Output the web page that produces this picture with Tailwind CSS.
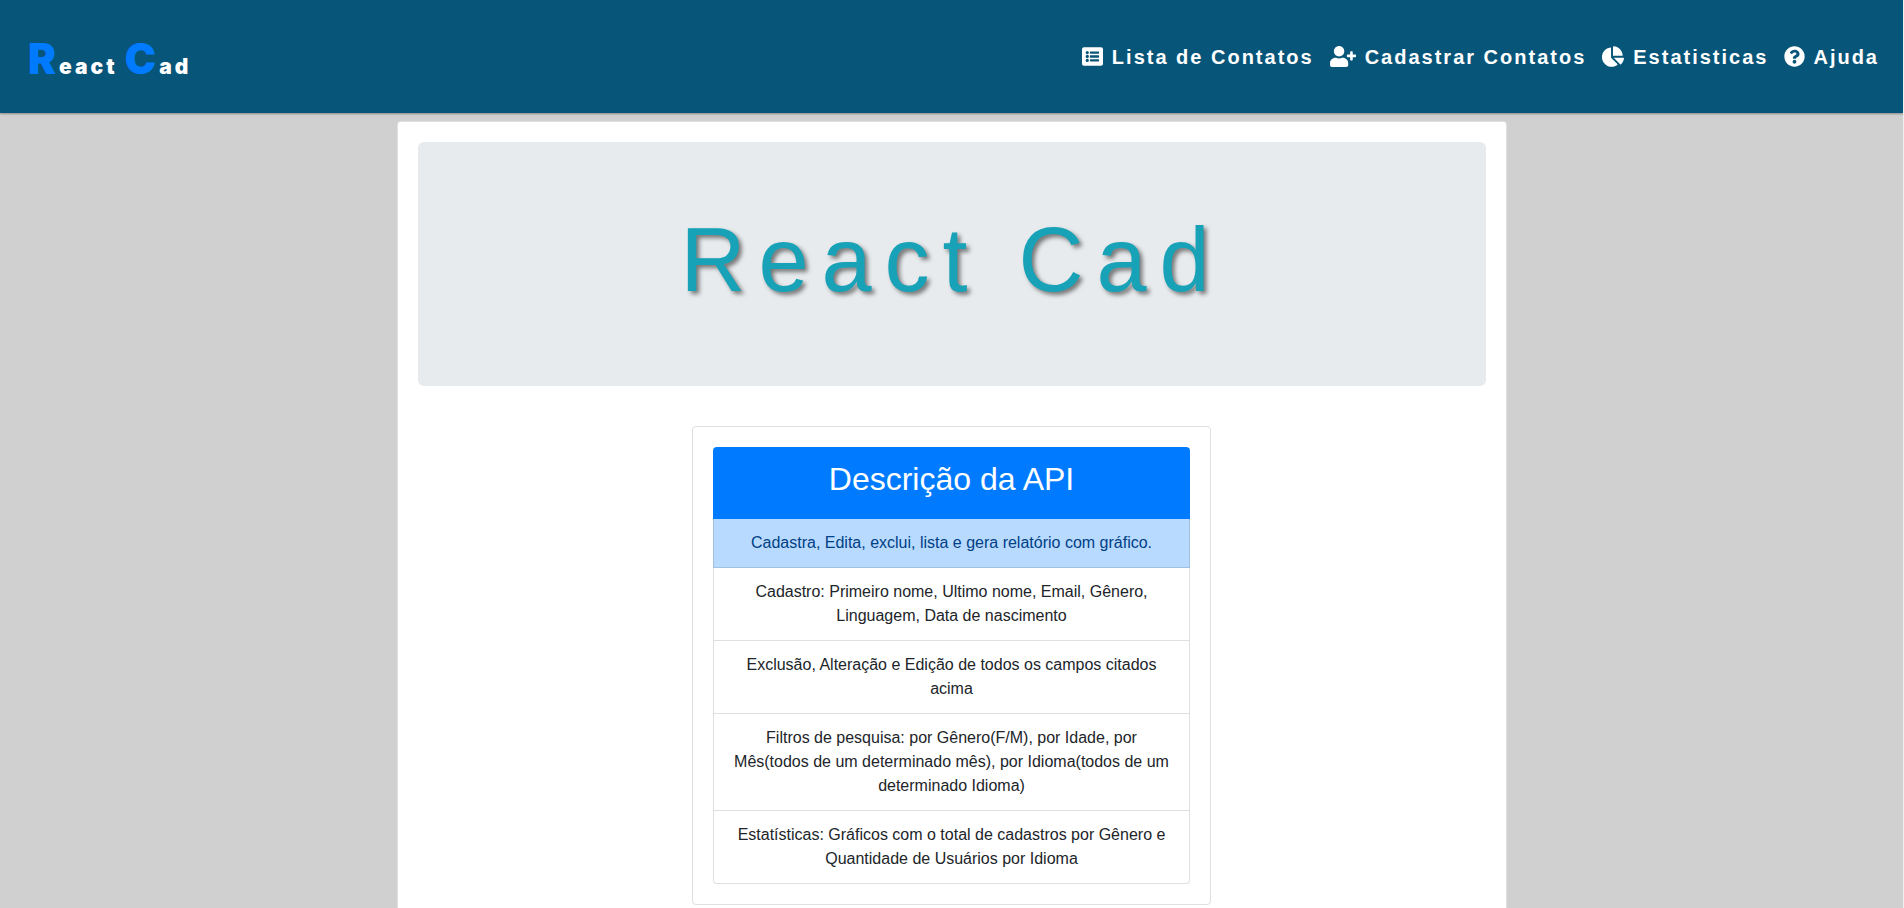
<!DOCTYPE html>
<html lang="pt-BR">
<head>
<meta charset="utf-8">
<meta name="viewport" content="width=device-width, initial-scale=1">
<title>React Cad</title>
<script src="https://cdn.jsdelivr.net/npm/@tailwindcss/browser@4"></script>
</head>
<body class="min-h-screen border-r border-[#f0f0f0] bg-[#d0d0d0] font-['Liberation_Sans',Arial,sans-serif] text-base text-[#212529]">
<header class="flex h-[113px] items-center justify-between bg-[#08557a] pr-6 pl-7 shadow-[0_1px_2px_#888]">
  <a href="#" class="pt-1 font-['Arial_Black',Inter,sans-serif] text-[21px] leading-none font-black tracking-[3px] text-white"><span class="text-[42px] text-[#007bff]">R</span>eact <span class="text-[42px] text-[#007bff]">C</span>ad</a>
  <nav class="flex items-center gap-4 text-xl leading-[30px] font-bold tracking-[2px] text-white">
    <a href="#" class="flex items-center gap-[9px]">
      <svg class="h-[21px] w-[21px]" viewBox="0 0 512 512" fill="currentColor" aria-hidden="true"><path fill-rule="evenodd" d="M464 480H48c-26.500 0-48-21.500-48-48V80c0-26.500 21.500-48 48-48h416c26.500 0 48 21.500 48 48v352c0 26.500-21.500 48-48 48zM128 120a40 40 0 1 0 0 80a40 40 0 0 0 0-80zm0 96a40 40 0 1 0 0 80a40 40 0 0 0 0-80zm0 96a40 40 0 1 0 0 80a40 40 0 0 0 0-80zm288-136v-32c0-6.600-5.400-12-12-12H204c-6.600 0-12 5.400-12 12v32c0 6.600 5.400 12 12 12h200c6.600 0 12-5.400 12-12zm0 96v-32c0-6.600-5.400-12-12-12H204c-6.600 0-12 5.400-12 12v32c0 6.600 5.400 12 12 12h200c6.600 0 12-5.400 12-12zm0 96v-32c0-6.600-5.400-12-12-12H204c-6.600 0-12 5.400-12 12v32c0 6.600 5.400 12 12 12h200c6.600 0 12-5.400 12-12z"/></svg>
      Lista de Contatos</a>
    <a href="#" class="flex items-center gap-[9px]">
      <svg class="h-[21px] w-[26px]" viewBox="0 0 640 512" fill="currentColor" aria-hidden="true"><path d="M624 208h-64v-64c0-8.800-7.200-16-16-16h-32c-8.800 0-16 7.200-16 16v64h-64c-8.800 0-16 7.200-16 16v32c0 8.800 7.200 16 16 16h64v64c0 8.800 7.200 16 16 16h32c8.800 0 16-7.200 16-16v-64h64c8.800 0 16-7.200 16-16v-32c0-8.800-7.200-16-16-16zm-400 48c70.700 0 128-57.300 128-128S294.700 0 224 0 96 57.300 96 128s57.300 128 128 128zm89.600 32h-16.700c-22.200 10.200-46.900 16-72.900 16s-50.600-5.800-72.900-16h-16.700C60.200 288 0 348.200 0 422.400V464c0 26.500 21.500 48 48 48h352c26.500 0 48-21.500 48-48v-41.600c0-74.200-60.200-134.400-134.400-134.400z"/></svg>
      Cadastrar Contatos</a>
    <a href="#" class="flex items-center gap-[9px]">
      <svg class="h-[21px] w-[22px]" viewBox="0 0 544 512" fill="currentColor" aria-hidden="true"><path d="M527.790 288H290.500l158.030 158.030c6.040 6.040 15.980 6.530 22.190.680 38.700-36.460 65.320-85.610 73.130-140.860 1.340-9.460-6.510-17.850-16.060-17.850zm-15.830-64.800C503.720 103.740 408.260 8.280 288.800.040 279.680-.590 272 7.100 272 16.240V240h223.770c9.140 0 16.820-7.680 16.190-16.800zM224 288V50.710c0-9.550-8.390-17.400-17.840-16.060C86.990 51.490-4.100 155.600.140 280.370 4.500 408.510 114.830 513.590 243.030 511.980c50.400-.630 96.970-16.870 135.260-44.030 7.900-5.600 8.420-17.230 1.570-24.080L224 288z"/></svg>
      Estatisticas</a>
    <a href="#" class="flex items-center gap-2">
      <svg class="h-[21px] w-[21px]" viewBox="0 0 512 512" fill="currentColor" aria-hidden="true"><path d="M504 256c0 136.997-111.043 248-248 248S8 392.997 8 256C8 119.083 119.043 8 256 8s248 111.083 248 248zM262.655 90c-54.497 0-89.255 22.957-116.549 63.758-3.536 5.286-2.353 12.415 2.715 16.258l34.699 26.310c5.205 3.947 12.621 3.008 16.665-2.122 17.864-22.658 30.113-35.797 57.303-35.797 20.429 0 45.698 13.148 45.698 32.958 0 14.976-12.363 22.667-32.534 33.976C247.128 238.528 216 254.941 216 296v4c0 6.627 5.373 12 12 12h56c6.627 0 12-5.373 12-12v-1.333c0-28.462 83.186-29.647 83.186-106.667 0-58.002-60.165-102-116.531-102zM256 338c-25.365 0-46 20.635-46 46 0 25.364 20.635 46 46 46s46-20.636 46-46c0-25.365-20.635-46-46-46z"/></svg>
      Ajuda</a>
  </nav>
</header>
<main class="mx-auto mt-2 max-w-[1110px] rounded border border-black/12 bg-white p-5">
  <div class="rounded-md bg-[#e7ebee] px-8 py-16 text-center">
    <h1 class="mb-2 text-[90px] leading-[108px] font-light tracking-[13px] text-[#17a2b8] text-shadow-[3px_3px_4px_#777]">React Cad</h1>
  </div>
  <section class="mx-auto mt-10 max-w-[519px] rounded border border-[#dfdfdf] bg-white p-5 text-center">
    <ul>
      <li class="rounded-t bg-[#007bff] px-5 pt-[13px] pb-5 text-white"><h2 class="text-[32px] leading-[39px] font-medium">Descrição da API</h2></li>
      <li class="border border-t-0 border-[#a1bfdf] bg-[#b8daff] px-5 py-3 text-[#004085]">Cadastra, Edita, exclui, lista e gera relatório com gráfico.</li>
      <li class="border border-t-0 border-[#dfdfdf] px-5 py-3">Cadastro: Primeiro nome, Ultimo nome, Email, Gênero, Linguagem, Data de nascimento</li>
      <li class="border border-t-0 border-[#dfdfdf] px-5 py-3">Exclusão, Alteração e Edição de todos os campos citados acima</li>
      <li class="border border-t-0 border-[#dfdfdf] px-5 py-3">Filtros de pesquisa: por Gênero(F/M), por Idade, por Mês(todos de um determinado mês), por Idioma(todos de um determinado Idioma)</li>
      <li class="rounded-b border border-t-0 border-[#dfdfdf] px-5 py-3">Estatísticas: Gráficos com o total de cadastros por Gênero e Quantidade de Usuários por Idioma</li>
    </ul>
  </section>
</main>
</body>
</html>
